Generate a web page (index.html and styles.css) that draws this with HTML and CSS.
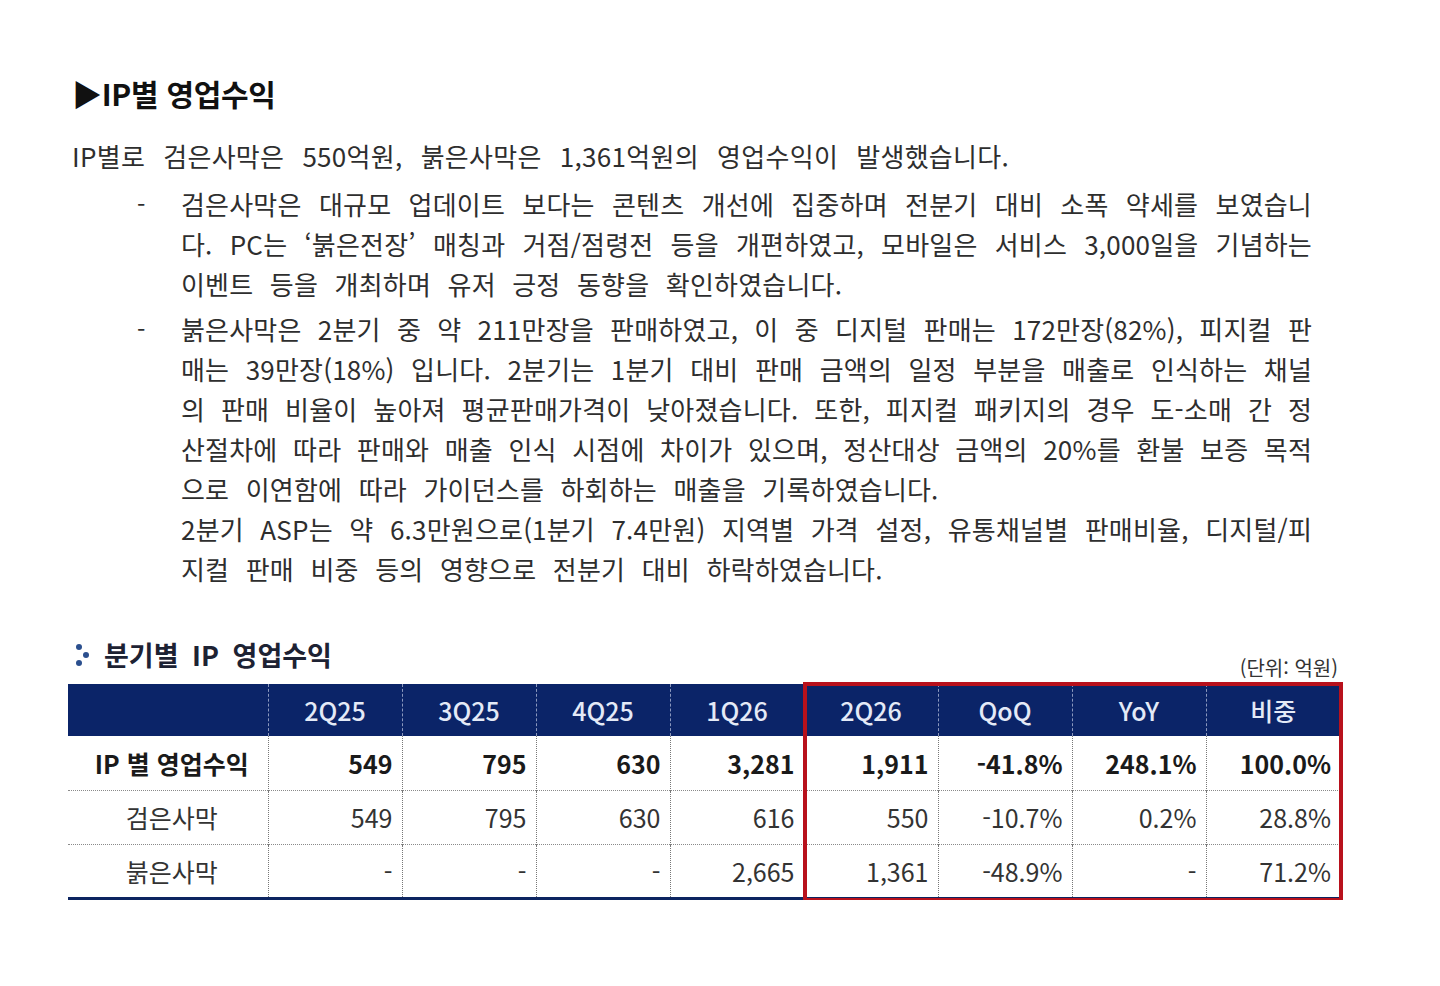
FILE: index.html
```html
<!DOCTYPE html>
<html lang="ko">
<head>
<meta charset="utf-8">
<title>IP별 영업수익</title>
<link rel="stylesheet" href="styles.css">
</head>
<body>
<main class="page">
  <h1 class="title">▶IP별 영업수익</h1>
  <p class="lead">IP별로 검은사막은 550억원, 붉은사막은 1,361억원의 영업수익이 발생했습니다.</p>
  <ul class="bullets">
    <li class="item">
      <span class="dash">-</span>
      <div class="text">
        <span class="ln">검은사막은 대규모 업데이트 보다는 콘텐츠 개선에 집중하며 전분기 대비 소폭 약세를 보였습니</span>
        <span class="ln">다. PC는 ‘붉은전장’ 매칭과 거점/점령전 등을 개편하였고, 모바일은 서비스 3,000일을 기념하는</span>
        <span class="ln last">이벤트 등을 개최하며 유저 긍정 동향을 확인하였습니다.</span>
      </div>
    </li>
    <li class="item">
      <span class="dash">-</span>
      <div class="text">
        <span class="ln tight">붉은사막은 2분기 중 약 211만장을 판매하였고, 이 중 디지털 판매는 172만장(82%), 피지컬 판</span>
        <span class="ln">매는 39만장(18%) 입니다. 2분기는 1분기 대비 판매 금액의 일정 부분을 매출로 인식하는 채널</span>
        <span class="ln tight">의 판매 비율이 높아져 평균판매가격이 낮아졌습니다. 또한, 피지컬 패키지의 경우 도-소매 간 정</span>
        <span class="ln tight">산절차에 따라 판매와 매출 인식 시점에 차이가 있으며, 정산대상 금액의 20%를 환불 보증 목적</span>
        <span class="ln last">으로 이연함에 따라 가이던스를 하회하는 매출을 기록하였습니다.</span>
        <span class="ln tight">2분기 ASP는 약 6.3만원으로(1분기 7.4만원) 지역별 가격 설정, 유통채널별 판매비율, 디지털/피</span>
        <span class="ln last">지컬 판매 비중 등의 영향으로 전분기 대비 하락하였습니다.</span>
      </div>
    </li>
  </ul>

  <div class="section-head">
    <h2 class="subtitle">
      <svg class="sub-icon" width="16" height="24" viewBox="0 0 16 24" aria-hidden="true">
        <circle cx="5" cy="4" r="3" fill="#2b4f8e"/>
        <circle cx="12" cy="12" r="3" fill="#2b4f8e"/>
        <circle cx="5" cy="20" r="3" fill="#2b4f8e"/>
      </svg>
      분기별 IP 영업수익
    </h2>
    <span class="unit">(단위: 억원)</span>
  </div>

  <div class="table-wrap">
    <table class="data">
      <colgroup>
        <col class="c-name">
        <col><col><col><col><col><col><col><col>
      </colgroup>
      <thead>
        <tr>
          <th></th><th>2Q25</th><th>3Q25</th><th>4Q25</th><th>1Q26</th><th>2Q26</th><th>QoQ</th><th>YoY</th><th>비중</th>
        </tr>
      </thead>
      <tbody>
        <tr class="total">
          <td class="name">IP 별 영업수익</td><td>549</td><td>795</td><td>630</td><td>3,281</td><td>1,911</td><td>-41.8%</td><td>248.1%</td><td>100.0%</td>
        </tr>
        <tr>
          <td class="name">검은사막</td><td>549</td><td>795</td><td>630</td><td>616</td><td>550</td><td>-10.7%</td><td>0.2%</td><td>28.8%</td>
        </tr>
        <tr>
          <td class="name">붉은사막</td><td>-</td><td>-</td><td>-</td><td>2,665</td><td>1,361</td><td>-48.9%</td><td>-</td><td>71.2%</td>
        </tr>
      </tbody>
    </table>
    <div class="highlight"></div>
  </div>
</main>
</body>
</html>
```

FILE: styles.css
```css
* { box-sizing: border-box; }

html, body {
  margin: 0;
  padding: 0;
  background: #ffffff;
}

body {
  font-family: "Noto Sans CJK KR", "Noto Sans", sans-serif;
  color: #2e2e2e;
}

.page {
  width: 1440px;
  padding: 74px 0 0 68px;
}

.title {
  margin: 0 0 0 4px;
  font-size: 30px;
  line-height: 38px;
  font-weight: 700;
  color: #111;
  letter-spacing: -0.3px;
}

.lead {
  margin: 24px 0 0 4px;
  font-size: 26px;
  line-height: 40px;
  letter-spacing: 0.3px;
  word-spacing: 10.5px;
}

.bullets {
  list-style: none;
  margin: 8px 0 0 0;
  padding: 0 0 0 69px;
  width: 1244px;
}

.item {
  display: grid;
  grid-template-columns: 44px 1fr;
  margin-bottom: 5px;
}

.dash {
  font-size: 24px;
  line-height: 40px;
}

.text {
  font-size: 26px;
  line-height: 40px;
  letter-spacing: 0.2px;
  word-spacing: 9px;
}

.ln {
  display: block;
  text-align: justify;
  text-align-last: justify;
  white-space: nowrap;
}

.ln.tight {
  word-spacing: 7px;
}

.ln.last {
  text-align-last: left;
}

.section-head {
  display: flex;
  align-items: flex-end;
  justify-content: space-between;
  width: 1272px;
  margin-top: 49px;
}

.subtitle {
  display: flex;
  align-items: center;
  gap: 14px;
  margin: 0 0 0 6px;
  font-size: 27px;
  line-height: 34px;
  font-weight: 700;
  color: #1d2233;
  word-spacing: 6px;
}

.sub-icon {
  display: block;
}

.unit {
  font-size: 20px;
  line-height: 24px;
  color: #333;
  margin-right: 2px;
  margin-bottom: -8px;
}

.table-wrap {
  position: relative;
  width: 1272px;
  margin-top: 12px;
}

.data {
  width: 1272px;
  border-collapse: collapse;
  table-layout: fixed;
  border-bottom: 3px solid #0c2460;
}

.c-name { width: 200px; }

.data th {
  height: 52px;
  background: #0b2468;
  color: #e4eaf7;
  font-size: 25px;
  font-weight: 500;
  text-align: center;
  padding: 0;
  border-left: 1px dashed #8a97bd;
}

.data th:first-child { border-left: none; }

.data td {
  height: 54px;
  font-size: 25px;
  text-align: right;
  padding: 0 9px 0 0;
  color: #333;
  border-left: 1px dotted #777;
  border-top: 1px dotted #8a8a8a;
}

.data tbody tr:first-child td { border-top: none; }

.data td.name {
  text-align: center;
  padding: 0 0 0 8px;
  border-left: none;
}

.data tr.total td {
  font-weight: 700;
  color: #1a1a1a;
}

.highlight {
  position: absolute;
  left: 735px;
  top: -2px;
  width: 540px;
  height: 220px;
  border: 4px solid #b8111c;
  pointer-events: none;
}
```
